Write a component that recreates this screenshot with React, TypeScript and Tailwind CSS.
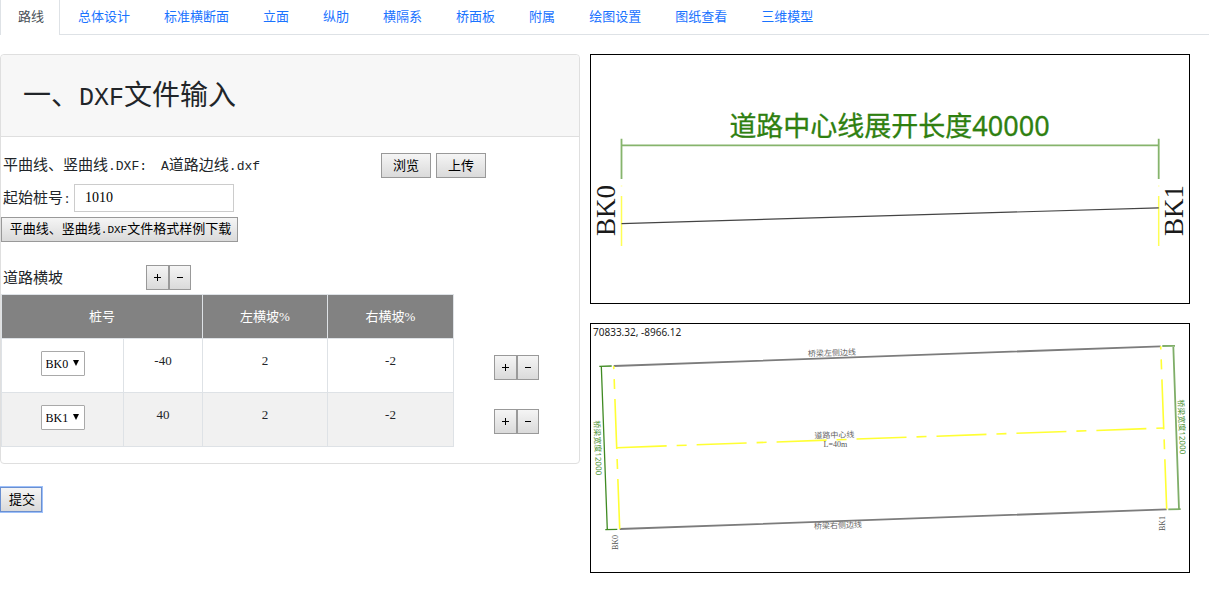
import type { ButtonHTMLAttributes, ReactNode } from "react";

const tabs = [
  "路线",
  "总体设计",
  "标准横断面",
  "立面",
  "纵肋",
  "横隔系",
  "桥面板",
  "附属",
  "绘图设置",
  "图纸查看",
  "三维模型",
];

const stations = [
  { name: "BK0", offset: "-40", left: "2", right: "-2", cell: "bg-white" },
  { name: "BK1", offset: "40", left: "2", right: "-2", cell: "bg-[#f1f1f1]" },
];

function Button({
  className = "",
  ...rest
}: ButtonHTMLAttributes<HTMLButtonElement>) {
  return (
    <button
      type="button"
      className={`h-[25px] border border-[#999] bg-linear-to-b from-[#f5f5f5] to-[#dadada] text-[13px] leading-5 text-black ${className}`}
      {...rest}
    />
  );
}

function PlusMinus({ label }: { label: string }) {
  return (
    <div className="flex">
      <Button
        className="flex w-[23px] items-center justify-center"
        aria-label={`${label}增加`}
      >
        <svg width="7" height="7" stroke="#000" aria-hidden="true">
          <path d="M0 3.5H7M3.5 0V7" />
        </svg>
      </Button>
      <Button
        className="flex w-[22px] items-center justify-center"
        aria-label={`${label}删除`}
      >
        <svg width="6" height="7" stroke="#000" aria-hidden="true">
          <path d="M0 3.5H6" />
        </svg>
      </Button>
    </div>
  );
}

function Canvas({ label, children }: { label: string; children: ReactNode }) {
  return (
    <div className="border border-black">
      <svg
        viewBox="1 1 598 248"
        className="block w-full"
        role="img"
        aria-label={label}
      >
        {children}
      </svg>
    </div>
  );
}

const sans = "font-['Noto_Sans','Noto_Sans_CJK_SC',sans-serif]";
const serif = "font-['Liberation_Serif','Noto_Sans_CJK_SC',serif]";

function ElevationDrawing() {
  return (
    <Canvas label="道路中心线展开图">
      <g stroke="#86b46c" strokeWidth="1.8" fill="none">
        <path d="M31.5 91.3H568.7M31.5 84.7V125M568.7 84.7V125" />
      </g>
      <g stroke="#ffff55" strokeWidth="1.5">
        <path d="M31.5 142V192M568.7 142V192" />
        <path d="M31.5 131.5V132.5M568.7 131.5V132.5" opacity="0.6" />
      </g>
      <path d="M31.5 169.6L568.7 153.8" stroke="#444" strokeWidth="1.2" />
      <text
        x="299.5"
        y="82"
        textAnchor="middle"
        fill="#2f8010"
        stroke="#2f8010"
        strokeWidth="0.3"
        className={`text-[27px] ${sans}`}
      >
        道路中心线展开长度40000
      </text>
      <g fill="#1a1a1a" className={`text-[27px] ${serif}`}>
        <text transform="translate(25 182) rotate(-90)">BK0</text>
        <text transform="translate(592.5 182) rotate(-90)">BK1</text>
      </g>
    </Canvas>
  );
}

function PlanDrawing() {
  return (
    <Canvas label="桥梁平面图">
      <text x="3" y="12.5" fill="#222" className={`text-[10px] ${sans}`}>
        70833.32, -8966.12
      </text>
      <g stroke="#7c7c7c" strokeWidth="1.8">
        <path d="M23.7 43L570.7 23.3M29.7 206L576.7 186.3" />
      </g>
      <g
        stroke="#ffff33"
        strokeWidth="1.6"
        strokeDasharray="50 10 10 10"
        fill="none"
      >
        <path d="M26.7 124.7L574 105" />
        <path d="M29.7 206L23.7 43" />
        <path d="M576.7 186.3L570.7 23.3" />
      </g>
      <path
        d="M9.3 43.3L21.7 43M11.3 43L17.3 206.5M15.3 206.7L27.3 206.3"
        stroke="#3f8a22"
        strokeWidth="1.3"
        fill="none"
      />
      <path
        d="M572.3 23L585 22.8M583.3 23L589 186.3M578.3 186.4L590.7 186.2"
        stroke="#7fae68"
        strokeWidth="1.8"
        fill="none"
      />
      <g fill="#4f9436" className={`text-[8px] ${sans}`}>
        <text transform="translate(4 97.5) rotate(87.9)">桥梁宽度12000</text>
        <text transform="translate(588 76.5) rotate(87.9)">桥梁宽度12000</text>
      </g>
      <g fill="#666" className={`text-[8px] ${sans}`}>
        <text transform="translate(218 33.5) rotate(-2)">桥梁左侧边线</text>
        <text transform="translate(224.5 115.5) rotate(-2)">道路中心线</text>
        <text transform="translate(224 206) rotate(-2)">桥梁右侧边线</text>
      </g>
      <g fill="#555" className={`text-[8px] ${serif}`}>
        <text x="233.5" y="123.5">
          L=40m
        </text>
        <text transform="translate(28 227) rotate(-90)">BK0</text>
        <text transform="translate(574.7 208) rotate(-90)">BK1</text>
      </g>
    </Canvas>
  );
}

function SlopeTable() {
  const head = "h-[44px] border border-[#dee2e6] bg-[#828282] p-0 font-normal text-white";
  const cell = "border border-[#dee2e6] px-3 pt-3";
  return (
    <table className="w-[538px] table-fixed border-collapse text-center align-top text-[13px] leading-5">
      <colgroup>
        <col className="w-[122px]" />
        <col className="w-[79px]" />
        <col className="w-[125px]" />
        <col className="w-[126px]" />
        <col className="w-[86px]" />
      </colgroup>
      <thead>
        <tr>
          <th colSpan={2} className={head}>
            桩号
          </th>
          <th className={head}>左横坡%</th>
          <th className={head}>右横坡%</th>
        </tr>
      </thead>
      <tbody>
        {stations.map((s) => (
          <tr key={s.name} className="h-[54px] align-top">
            <td className={`${cell} ${s.cell}`}>
              <div className="relative mx-auto h-[25px] w-[44px]">
                <select
                  aria-label={`桩号 ${s.name}`}
                  defaultValue={s.name}
                  className="block h-full w-full appearance-none rounded-[1px] border border-[#a9a9a9] bg-white pl-1 text-[12px] leading-5 text-black"
                >
                  <option>BK0</option>
                  <option>BK1</option>
                </select>
                <svg
                  width="6"
                  height="6"
                  className="pointer-events-none absolute top-[9px] right-[6px]"
                  aria-hidden="true"
                >
                  <path d="M0 0H6L3 6Z" fill="#000" />
                </svg>
              </div>
            </td>
            <td className={`${cell} ${s.cell}`}>{s.offset}</td>
            <td className={`${cell} ${s.cell}`}>{s.left}</td>
            <td className={`${cell} ${s.cell}`}>{s.right}</td>
            <td className="p-0 pt-4 pl-10">
              <PlusMinus label={s.name} />
            </td>
          </tr>
        ))}
      </tbody>
    </table>
  );
}

export default function App() {
  return (
    <div className="min-h-screen bg-white font-['Liberation_Serif','Noto_Sans_CJK_SC',serif] text-[15px] leading-5 text-[#212529]">
      <nav className="flex border-b border-[#dee2e6] text-[13px]">
        {tabs.map((tab, i) => (
          <a
            key={tab}
            href="#"
            aria-current={i === 0 ? "page" : undefined}
            className={
              i === 0
                ? "-mb-px border-x border-[#dee2e6] bg-white pt-[7px] pr-[15px] pb-2 pl-[17px] text-[#495057]"
                : "border-x border-transparent pt-[7px] pr-[15px] pb-[7px] pl-[17px] text-[#1a73ff]"
            }
          >
            {tab}
          </a>
        ))}
      </nav>

      <main className="flex items-start gap-[10px] pt-[19px]">
        <form className="w-[48%]" onSubmit={(e) => e.preventDefault()}>
          <section className="rounded border border-[#dfdfdf] bg-white">
            <header className="flex h-[82px] items-center rounded-t border-b border-[#dfdfdf] bg-[#f7f7f7] px-[22px] pt-1">
              <h1 className="text-[28px] leading-8">
                一、
                <span className="font-['Liberation_Mono',monospace] text-[25px]">
                  DXF
                </span>
                文件输入
              </h1>
            </header>

            <div className="pt-4 pb-4">
              <div className="flex items-center gap-[5px]">
                <div className="flex w-[375px] items-center gap-[14px] pl-0.5">
                  <span>
                    平曲线、竖曲线
                    <span className="font-['Liberation_Mono',monospace] text-[13px]">
                      .DXF:
                    </span>
                  </span>
                  <span>
                    <span className="font-['Liberation_Mono',monospace] text-[13px]">
                      A
                    </span>
                    道路边线
                    <span className="font-['Liberation_Mono',monospace] text-[13px]">
                      .dxf
                    </span>
                  </span>
                </div>
                <Button className="w-[50px]">浏览</Button>
                <Button className="w-[50px]">上传</Button>
              </div>

              <div className="mt-[6px] flex items-center">
                <label htmlFor="start-station" className="w-[73px] pl-0.5">
                  起始桩号<span className="pl-0.5">:</span>
                </label>
                <input
                  id="start-station"
                  type="text"
                  defaultValue="1010"
                  className="h-[28px] w-[160px] border border-[#ccc] bg-white px-[10px] text-[14px] text-black"
                />
              </div>

              <Button className="mt-[5px] block w-[237px] pl-0.5">
                平曲线、竖曲线
                <span className="font-['Liberation_Mono',monospace] text-[11px]">
                  .DXF
                </span>
                文件格式样例下载
              </Button>

              <div className="mt-[23px] mb-1 flex items-center">
                <span className="w-[145px] pl-0.5">道路横坡</span>
                <PlusMinus label="道路横坡" />
              </div>

              <SlopeTable />
            </div>
          </section>

          <button
            type="submit"
            className="mt-[23px] block h-[25px] w-[42px] border border-[#6a8fd0] bg-linear-to-b from-[#f5f5f5] to-[#dadada] pl-0.5 text-[13px] leading-5 text-black ring-1 ring-[#9dc0fa]"
          >
            提交
          </button>
        </form>

        <div className="flex max-w-[600px] min-w-0 flex-1 flex-col gap-[19px]">
          <ElevationDrawing />
          <PlanDrawing />
        </div>
      </main>
    </div>
  );
}
